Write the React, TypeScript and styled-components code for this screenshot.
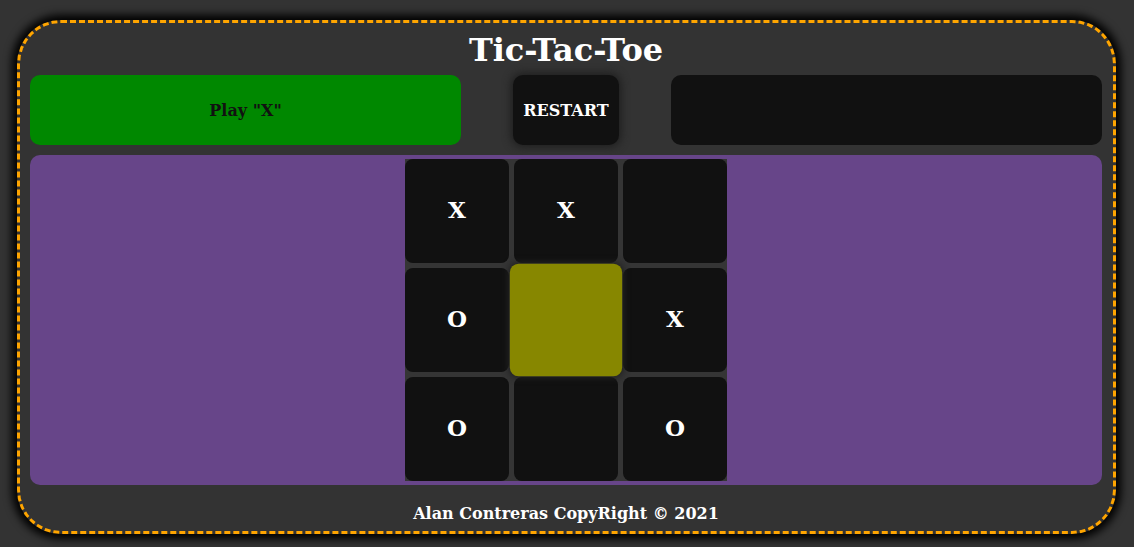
import React from "react"
import styled, { createGlobalStyle } from "styled-components"

const GlobalStyle = createGlobalStyle`
  html, body {
    margin: 0;
    padding: 0;
    background: #333333;
    font-family: "DejaVu Serif", "Liberation Serif", serif;
  }
`

type Mark = "X" | "O" | ""

const board: Mark[] = ["X", "X", "", "O", "", "X", "O", "", "O"]
const highlighted = 4

const Page = styled.div`
  padding: 20px 18px 13px 17px;
`

const Card = styled.div`
  height: 514px;
  box-sizing: border-box;
  border: 3px dashed #ffa500;
  border-radius: 44px;
  background: #333333;
  box-shadow: 0 0 9px 5px #000000;
  padding: 5px 11px 0 10px;
  display: flex;
  flex-direction: column;
`

const Title = styled.h1`
  margin: 0;
  text-align: center;
  color: #ffffff;
  font-size: 32px;
  line-height: 44px;
  font-weight: bold;
`

const Controls = styled.div`
  margin-top: 3px;
  display: grid;
  grid-template-columns: 1fr auto 1fr;
  column-gap: 52px;
  height: 70px;
`

const Status = styled.div<{ $tone: "green" | "dark" }>`
  display: flex;
  align-items: center;
  justify-content: center;
  border-radius: 10px;
  background: ${(p) => (p.$tone === "green" ? "#008800" : "#111111")};
  color: #111111;
  font-size: 16px;
  font-weight: bold;
`

const RestartButton = styled.button`
  width: 106px;
  border: none;
  border-radius: 10px;
  background: #111111;
  color: #ffffff;
  font-family: inherit;
  font-size: 16px;
  font-weight: bold;
  box-shadow: 0 0 8px 2px #1e1e1e;
  cursor: pointer;
`

const Board = styled.div`
  margin-top: 10px;
  height: 330px;
  box-sizing: border-box;
  padding: 4px 0;
  border-radius: 10px;
  background: #674589;
  display: flex;
  justify-content: center;
`

const Grid = styled.div`
  display: grid;
  grid-template-columns: repeat(3, 104px);
  grid-template-rows: repeat(3, 104px);
  gap: 5px;
  background: #353535;
`

const Cell = styled.div<{ $active: boolean }>`
  display: flex;
  align-items: center;
  justify-content: center;
  padding-bottom: 3px;
  box-sizing: border-box;
  border-radius: 8px;
  background: ${(p) => (p.$active ? "#878700" : "#111111")};
  color: #ffffff;
  font-size: 23px;
  font-weight: bold;
  transform: ${(p) => (p.$active ? "scale(1.08)" : "none")};
  box-shadow: ${(p) => (p.$active ? "0 0 6px 1px #222222" : "none")};
  z-index: ${(p) => (p.$active ? 1 : 0)};
`

const Footer = styled.footer`
  flex: 1;
  padding-top: 10px;
  display: flex;
  align-items: center;
  justify-content: center;
  color: #ffffff;
  font-size: 16px;
  font-weight: bold;
`

export default function App() {
  return (
    <>
      <GlobalStyle />
      <Page>
        <Card>
          <Title>Tic-Tac-Toe</Title>
          <Controls>
            <Status $tone="green">Play "X"</Status>
            <RestartButton>RESTART</RestartButton>
            <Status $tone="dark" />
          </Controls>
          <Board>
            <Grid>
              {board.map((mark, i) => (
                <Cell key={i} $active={i === highlighted}>
                  {mark}
                </Cell>
              ))}
            </Grid>
          </Board>
          <Footer>Alan Contreras CopyRight © 2021</Footer>
        </Card>
      </Page>
    </>
  )
}
